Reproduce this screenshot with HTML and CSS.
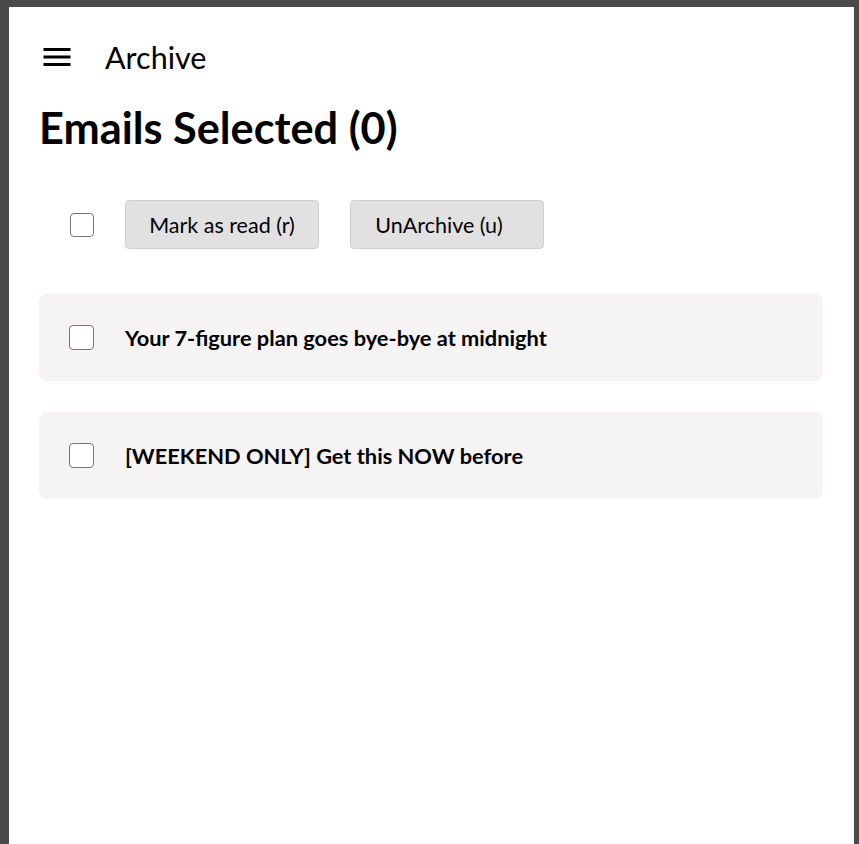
FILE: index.html
```html
<!DOCTYPE html>
<html lang="en">
<head>
<meta charset="utf-8">
<title>Archive</title>
<link rel="stylesheet" href="styles.css">
</head>
<body>
<div class="frame">
  <main class="page">
    <header class="topbar">
      <button class="menu-btn" aria-label="Menu">
        <svg viewBox="0 0 24 24" width="36" height="36"><path d="M3 6h18v2H3zM3 11h18v2H3zM3 16h18v2H3z" fill="#000"/></svg>
      </button>
      <span class="title">Archive</span>
    </header>
    <h1 class="heading">Emails Selected (0)</h1>
    <div class="toolbar">
      <span class="check"></span>
      <button class="btn">Mark as read (r)</button>
      <button class="btn btn-unarchive">UnArchive (u)</button>
    </div>
    <ul class="list">
      <li class="card"><span class="check"></span><span class="subject">Your 7-figure plan goes bye-bye at midnight</span></li>
      <li class="card"><span class="check"></span><span class="subject">[WEEKEND ONLY] Get this NOW before</span></li>
    </ul>
  </main>
</div>
</body>
</html>
```
FILE: styles.css
```css
html, body {
  margin: 0;
  padding: 0;
  height: 100%;
}
body {
  background: #4a4a4a;
  font-family: "Lato", "Noto Sans", sans-serif;
  color: #000;
}
.frame {
  padding: 7px 5px 0 9px;
  height: 100%;
  box-sizing: border-box;
}
.page {
  background: #fff;
  height: 100%;
  padding: 0 31px 0 30px;
  box-sizing: border-box;
}
.topbar {
  display: flex;
  align-items: center;
  height: 36px;
  padding-top: 32px;
}
.menu-btn {
  border: 0;
  background: none;
  padding: 0;
  margin: 0 30px 0 0;
  width: 36px;
  height: 36px;
  display: flex;
}
.title {
  font-size: 30.5px;
  line-height: 36px;
  font-weight: 400;
}
.heading {
  margin: 28px 0 0 0;
  font-size: 43.3px;
  line-height: 48px;
  font-weight: 700;
}
.toolbar {
  display: flex;
  align-items: center;
  gap: 31px;
  margin-top: 49px;
  padding-left: 31px;
}
.check {
  display: inline-block;
  flex: none;
  width: 24px;
  height: 24px;
  box-sizing: border-box;
  border: 1.5px solid #767676;
  border-radius: 4px;
  background: #fff;
}
.btn {
  width: 194px;
  height: 49px;
  background: #e1e1e1;
  border: 1px solid #cfcfcf;
  border-radius: 4px;
  font-family: inherit;
  font-size: 21.5px;
  color: #000;
  padding: 0;
}
.btn-unarchive {
  padding-right: 16px;
}
.list {
  list-style: none;
  margin: 45px 0 0 0;
  padding: 0;
  display: flex;
  flex-direction: column;
  gap: 31px;
}
.card {
  display: flex;
  align-items: center;
  gap: 31px;
  height: 87px;
  padding-left: 30px;
  background: #f5f3f4;
  border-radius: 8px;
}
.card .check {
  width: 25px;
  height: 25px;
}
.subject {
  font-size: 21.8px;
  font-weight: 700;
}
```
